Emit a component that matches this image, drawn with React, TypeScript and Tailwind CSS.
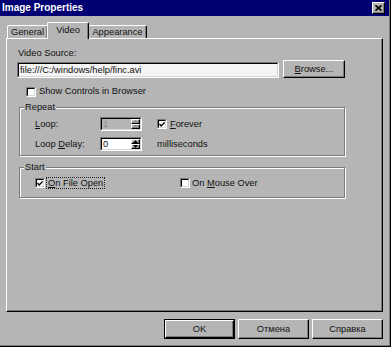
import React from "react";

const raised =
  "border-t border-l border-r border-b border-t-white border-l-white border-r-black border-b-black shadow-[inset_-1px_-1px_0_#7b7b7b]";

function Sunken({
  className,
  inner,
  children,
}: {
  className: string;
  inner: string;
  children?: React.ReactNode;
}) {
  return (
    <div
      className={
        "border-t border-l border-r border-b border-t-[#7b7b7b] border-l-[#7b7b7b] border-r-white border-b-white " +
        className
      }
    >
      <div
        className={
          "w-full h-full border-t border-l border-r border-b border-t-black border-l-black border-r-[#d6d6d6] border-b-[#d6d6d6] " +
          inner
        }
      >
        {children}
      </div>
    </div>
  );
}

function CheckBox({ checked }: { checked?: boolean }) {
  return (
    <Sunken className="w-[10px] h-[10px] shrink-0" inner="bg-white flex items-center justify-center">
      {checked && (
        <svg width="7" height="7" viewBox="0 0 7 7">
          <path d="M0.5 3 L2.5 5.2 L6.5 1" stroke="#000" strokeWidth="1.6" fill="none" />
        </svg>
      )}
    </Sunken>
  );
}

function Spin({ value, disabled }: { value: string; disabled?: boolean }) {
  return (
    <Sunken
      className="w-[42px] h-[14px]"
      inner={"flex " + (disabled ? "bg-[#b5b5b5]" : "bg-white")}
    >
      <div
        className={
          "flex-1 pl-[1px] flex items-center leading-[10px] " +
          (disabled ? "text-[#8a8a8a]" : "text-[#111]")
        }
      >
        {value}
      </div>
      <div className="w-[9px] flex flex-col">
        <div className={"flex-1 bg-[#b5b5b5] flex items-center justify-center " + raised}>
          <svg width="5" height="3" viewBox="0 0 5 3">
            <path d="M2.5 0 L5 3 L0 3 Z" fill={disabled ? "#8a8a8a" : "#000"} />
          </svg>
        </div>
        <div className={"flex-1 bg-[#b5b5b5] flex items-center justify-center " + raised}>
          <svg width="5" height="3" viewBox="0 0 5 3">
            <path d="M0 0 L5 0 L2.5 3 Z" fill={disabled ? "#8a8a8a" : "#000"} />
          </svg>
        </div>
      </div>
    </Sunken>
  );
}

function Group({
  label,
  className,
  children,
}: {
  label: string;
  className: string;
  children: React.ReactNode;
}) {
  return (
    <div
      className={
        "relative ml-[2px] w-[326px] border border-[#7b7b7b] shadow-[inset_1px_1px_0_#fff,1px_1px_0_#fff] " +
        className
      }
    >
      <span className="absolute left-[4px] top-[-7px] px-[1px] bg-[#b5b5b5] leading-[12px]">
        {label}
      </span>
      {children}
    </div>
  );
}

function Tab({ label, w }: { label: string; w: string }) {
  return (
    <div
      className={
        "h-[13px] flex items-center justify-center border-t border-l border-r border-t-white border-l-white border-r-black rounded-tl-[2px] rounded-tr-[2px] shadow-[inset_-1px_0_0_#7b7b7b] " +
        w
      }
    >
      {label}
    </div>
  );
}

export default function App() {
  return (
    <div className="w-[391px] h-[347px] border-r border-b border-black bg-[#b5b5b5] font-['Liberation_Sans',Arial,sans-serif] text-[9.3px] leading-[11px] text-[#111]">
      <div className="h-full border-r border-b border-[#7b7b7b] flex flex-col">
        {/* Title bar */}
        <div className="h-[16px] shrink-0 bg-[#000073] flex items-center justify-between pl-[2px] pr-[4px]">
          <span className="text-white font-bold text-[10px] leading-[12px]">Image Properties</span>
          <div className={"w-[13px] h-[12px] bg-[#b5b5b5] flex items-center justify-center " + raised}>
            <svg width="7" height="6" viewBox="0 0 7 6">
              <path d="M0.5 0.3 L6.5 5.7 M6.5 0.3 L0.5 5.7" stroke="#000" strokeWidth="1.7" />
            </svg>
          </div>
        </div>

        {/* Tabs */}
        <div className="mt-[6px] h-[16px] shrink-0 flex items-end pl-[7px] relative z-10">
          <Tab label="General" w="w-[41px]" />
          <div className="w-[42px] -mx-[1px] h-[17px] mb-[-1px] relative z-10 bg-[#b5b5b5] flex items-start pt-[2px] justify-center border-t border-l border-r border-t-white border-l-white border-r-black rounded-tl-[2px] rounded-tr-[2px] shadow-[inset_-1px_0_0_#7b7b7b]">
            Video
          </div>
          <Tab label="Appearance" w="w-[59px]" />
        </div>

        {/* Panel */}
        <div className="mx-[6px] h-[274px] shrink-0 border-t border-l border-r border-b border-t-white border-l-white border-r-black border-b-black shadow-[inset_-1px_-1px_0_#7b7b7b] pt-[9px] pl-[10px] flex flex-col">
          <div className="ml-[1px]">Video Source:</div>
          <div className="mt-[1px] flex items-end gap-[4px]">
            <Sunken className="w-[262px] h-[16px]" inner="bg-[#f4f4f4] pl-[1px] flex items-center">
              file:///C:/windows/help/finc.avi
            </Sunken>
            <div className={"w-[62px] h-[18px] flex items-center justify-center " + raised}>
              <span>
                <u>B</u>rowse...
              </span>
            </div>
          </div>

          <div className="mt-[8px] h-[11px] flex items-center pl-[9px] gap-[3px]">
            <CheckBox />
            <span>Show Controls in Browser</span>
          </div>

          <Group label="Repeat" className="mt-[10px] h-[49px] pt-[9px] pl-[15px]">
            <div className="flex items-center h-[14px]">
              <div className="w-[65px]">
                <u>L</u>oop:
              </div>
              <Spin value="1" disabled />
              <div className="ml-[15px] flex items-center gap-[3px]">
                <CheckBox checked />
                <span>
                  <u>F</u>orever
                </span>
              </div>
            </div>
            <div className="mt-[6px] flex items-center h-[14px]">
              <div className="w-[65px]">
                Loop <u>D</u>elay:
              </div>
              <Spin value="0" />
              <div className="ml-[15px]">milliseconds</div>
            </div>
          </Group>

          <Group label="Start" className="mt-[11px] h-[31px] pt-[9px] pl-[15px]">
            <div className="flex items-center h-[12px]">
              <div className="w-[145px] flex items-center gap-[1px]">
                <CheckBox checked />
                <span className="border border-dotted border-[#222] px-[1px] leading-[10px]">
                  <u>O</u>n File Open
                </span>
              </div>
              <div className="flex items-center gap-[2px]">
                <CheckBox />
                <span>
                  On <u>M</u>ouse Over
                </span>
              </div>
            </div>
          </Group>
        </div>

        {/* Buttons */}
        <div className="mt-[7px] flex justify-end gap-[3px] pr-[6px]">
          <div className="w-[71px] h-[20px] border border-black">
            <div className={"w-full h-full flex items-center justify-center " + raised}>OK</div>
          </div>
          <div className={"w-[71px] h-[20px] flex items-center justify-center " + raised}>Отмена</div>
          <div className={"w-[71px] h-[20px] flex items-center justify-center " + raised}>Справка</div>
        </div>
      </div>
    </div>
  );
}
